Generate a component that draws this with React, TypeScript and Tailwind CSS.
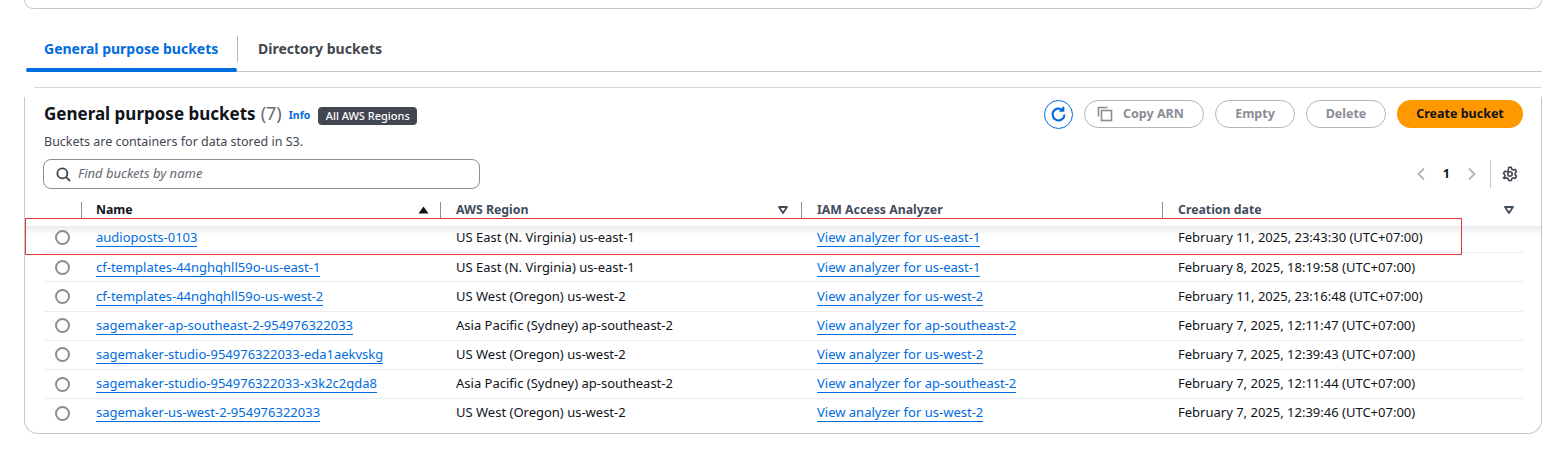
import React from "react";

const rows = [
  ["audioposts-0103", "US East (N. Virginia) us-east-1", "us-east-1", "February 11, 2025, 23:43:30 (UTC+07:00)"],
  ["cf-templates-44nghqhll59o-us-east-1", "US East (N. Virginia) us-east-1", "us-east-1", "February 8, 2025, 18:19:58 (UTC+07:00)"],
  ["cf-templates-44nghqhll59o-us-west-2", "US West (Oregon) us-west-2", "us-west-2", "February 11, 2025, 23:16:48 (UTC+07:00)"],
  ["sagemaker-ap-southeast-2-954976322033", "Asia Pacific (Sydney) ap-southeast-2", "ap-southeast-2", "February 7, 2025, 12:11:47 (UTC+07:00)"],
  ["sagemaker-studio-954976322033-eda1aekvskg", "US West (Oregon) us-west-2", "us-west-2", "February 7, 2025, 12:39:43 (UTC+07:00)"],
  ["sagemaker-studio-954976322033-x3k2c2qda8", "Asia Pacific (Sydney) ap-southeast-2", "ap-southeast-2", "February 7, 2025, 12:11:44 (UTC+07:00)"],
  ["sagemaker-us-west-2-954976322033", "US West (Oregon) us-west-2", "us-west-2", "February 7, 2025, 12:39:46 (UTC+07:00)"],
];

const cols = "grid grid-cols-[37px_359px_361px_361px_361px]";

function SortDown() {
  return (
    <svg width="10" height="8" viewBox="0 0 10 8" className="shrink-0">
      <path d="M1 1h8L5 7z" fill="none" stroke="#414d5c" strokeWidth="1.8" strokeLinejoin="round" />
    </svg>
  );
}

function Head({ label, strong, icon, pr, pl }: { label: string; strong?: boolean; icon?: React.ReactNode; pr: string; pl: string }) {
  return (
    <div className={`flex h-[16px] items-center justify-between border-l border-[#8c8c94] ${pl} ${pr}`}>
      <span className={`text-[12.3px] font-bold ${strong ? "text-[#0f141a]" : "text-[#414d5c]"}`}>{label}</span>
      {icon}
    </div>
  );
}

function Pill({ children, width }: { children: React.ReactNode; width: string }) {
  return (
    <div className={`ml-[11px] flex h-[28px] items-center justify-center rounded-full border border-[#b4b4bb] text-[12.5px] font-bold text-[#8c8c94] ${width}`}>
      {children}
    </div>
  );
}

export default function App() {
  return (
    <div
      className="relative h-[470px] w-[1566px] overflow-hidden bg-white pl-[24px] pr-[24px] text-[#0f141a]"
      style={{ fontFamily: '"Noto Sans", sans-serif' }}
    >
      <div className="h-[9px] rounded-b-[14px] border-x border-b border-[#c6c6cd]" />

      <div className="ml-[2px] mt-[26px] flex h-[37px] items-start border-b border-[#c6c6cd]">
        <div className="relative flex h-[36px] w-[211px] items-start pl-[18px] pt-[3px] text-[14px] font-bold text-[#006ce0]">
          General purpose buckets
          <div className="absolute bottom-[-1px] left-0 right-0 h-[4px] rounded-[2px] bg-[#006ce0]" />
        </div>
        <div className="mt-[1px] h-[26px] w-px bg-[#b4b4bb]" />
        <div className="pl-[20px] pt-[3px] text-[14px] font-bold text-[#424650]">Directory buckets</div>
      </div>

      <div className="relative mt-[15px] h-[347px] rounded-b-[14px] border-x border-b border-[#c6c6cd] pl-[19px] pr-[18px]">
        <div className="absolute -left-px top-0 h-[10px] w-px bg-white" />
        <div className="absolute -right-px top-0 h-[10px] w-px bg-white" />
        <div className="-ml-[10px] -mr-[18px] h-px bg-[#d5d5da]" />
        <div className="mt-[12px] flex h-[28px] items-center justify-between">
          <div className="flex items-center">
            <span className="mb-[1px] text-[17px] font-bold text-[#0f141a]">General purpose buckets</span>
            <span className="mb-[1px] ml-[5px] text-[18px] text-[#656871]">(7)</span>
            <span className="ml-[7px] mt-[4px] text-[10.5px] font-bold text-[#006ce0]">Info</span>
            <span className="ml-[8px] mt-[4px] flex h-[18px] w-[99px] items-center justify-center rounded-[4px] bg-[#424650] text-[11px] font-medium text-white">
              All AWS Regions
            </span>
          </div>
          <div className="flex items-center">
            <div className="flex h-[29px] w-[29px] items-center justify-center rounded-full border border-[#006ce0]">
              <svg width="17" height="17" viewBox="0 0 16 16" fill="none" stroke="#006ce0" strokeWidth="2">
                <path d="M13.6 8a5.6 5.6 0 1 1-2-4.3" />
                <path d="M12.5 0.8v3.6H8.9" />
              </svg>
            </div>
            <div className="ml-[11px] flex h-[28px] w-[120px] items-center rounded-full border border-[#b4b4bb] pl-[12px] text-[12.5px] font-bold text-[#8c8c94]">
              <svg width="16" height="16" viewBox="0 0 16 16" fill="none" stroke="#8c8c94" strokeWidth="1.6" className="mr-[10px]">
                <path d="M1.5 10.5V1.5h9" />
                <rect x="4.5" y="4.5" width="10" height="10" />
              </svg>
              Copy ARN
            </div>
            <Pill width="w-[80px]">Empty</Pill>
            <Pill width="w-[80px]">Delete</Pill>
            <div className="ml-[11px] flex h-[28px] w-[126px] items-center justify-center rounded-full bg-[#ff9900] text-[12.5px] font-bold text-[#0f141a]">
              Create bucket
            </div>
          </div>
        </div>
        <div className="mt-[4px] text-[12.5px] leading-[20px] text-[#424650]">Buckets are containers for data stored in S3.</div>

        <div className="mt-[7px] flex h-[30px] items-center justify-between">
          <div className="-ml-px flex h-[30px] w-[437px] items-center rounded-[8px] border border-[#8c8c94] pl-[12px]">
            <svg width="15" height="15" viewBox="0 0 16 16" fill="none" stroke="#424650" strokeWidth="2">
              <circle cx="6.8" cy="6.8" r="5.3" />
              <path d="M10.8 10.8l4.2 4.2" />
            </svg>
            <span className="ml-[7px] text-[13px] italic text-[#656871]">Find buckets by name</span>
          </div>
          <div className="flex items-center">
            <svg width="10" height="14" viewBox="0 0 10 14" fill="none" stroke="#b4b4bb" strokeWidth="1.8">
              <path d="M8 1.5L2.5 7 8 12.5" />
            </svg>
            <span className="ml-[17px] text-[12.5px] font-bold text-[#0f141a]">1</span>
            <svg width="10" height="14" viewBox="0 0 10 14" fill="none" stroke="#b4b4bb" strokeWidth="1.8" className="ml-[17px]">
              <path d="M2 1.5L7.5 7 2 12.5" />
            </svg>
            <div className="ml-[13px] h-[28px] w-px bg-[#c6c6cd]" />
            <svg width="16" height="16" viewBox="0 0 16 16" fill="none" stroke="#424650" strokeWidth="1.6" className="ml-[11px] mr-[5px]">
              <circle cx="8" cy="8" r="2.2" />
              <path d="M6.7 1.3h2.6l.5 1.9 1.5.8 1.9-.6 1.3 2.3-1.4 1.3v1.8l1.4 1.3-1.3 2.3-1.9-.6-1.5.8-.5 1.9H6.7l-.5-1.9-1.5-.8-1.9.6L1.5 11.9l1.4-1.3V8.8L1.5 7.5l1.3-2.3 1.9.6 1.5-.8z" strokeLinejoin="round" />
            </svg>
          </div>
        </div>

        <div className={`${cols} mt-[13px] h-[22px] items-start`}>
          <div />
          <Head
            label="Name"
            strong
            pl="pl-[14px]"
            pr="pr-[11px]"
            icon={
              <svg width="11" height="8" viewBox="0 0 10 8" className="shrink-0">
                <path d="M5 0.5l5 7H0z" fill="#0f141a" />
              </svg>
            }
          />
          <Head label="AWS Region" pl="pl-[15px]" pr="pr-[13px]" icon={<SortDown />} />
          <Head label="IAM Access Analyzer" pl="pl-[15px]" pr="pr-[13px]" />
          <Head label="Creation date" pl="pl-[15px]" pr="pr-[9px]" icon={<SortDown />} />
        </div>

        <div className="-mr-[18px] -ml-[19px] mt-[2px] h-[9px] bg-gradient-to-b from-[#ebebee] to-white" />

        <div className="-mt-[12px]">
          {rows.map((r, i) => (
            <div
              key={r[0]}
              className={`${cols} h-[29.2px] items-center text-[13px] ${i === 0 ? "" : "border-t border-[#ebebf0]"}`}
            >
              <div className="pl-[11px]">
                <div className="h-[15px] w-[15px] rounded-full border-2 border-[#8c8c94] bg-white" />
              </div>
              <div className="pl-[15px]">
                <span className="border-b border-[#006ce0] text-[#006ce0]">{r[0]}</span>
              </div>
              <div className="pl-[16px] text-[#0f141a]">{r[1]}</div>
              <div className="pl-[16px]">
                <span className="border-b border-[#006ce0] text-[#006ce0]">View analyzer for {r[2]}</span>
              </div>
              <div className="pl-[16px] text-[#0f141a]">{r[3]}</div>
            </div>
          ))}
        </div>
      </div>

      <div className="absolute left-[25px] top-[218px] h-[37px] w-[1437px] border border-[#e23b3b]" />
    </div>
  );
}
